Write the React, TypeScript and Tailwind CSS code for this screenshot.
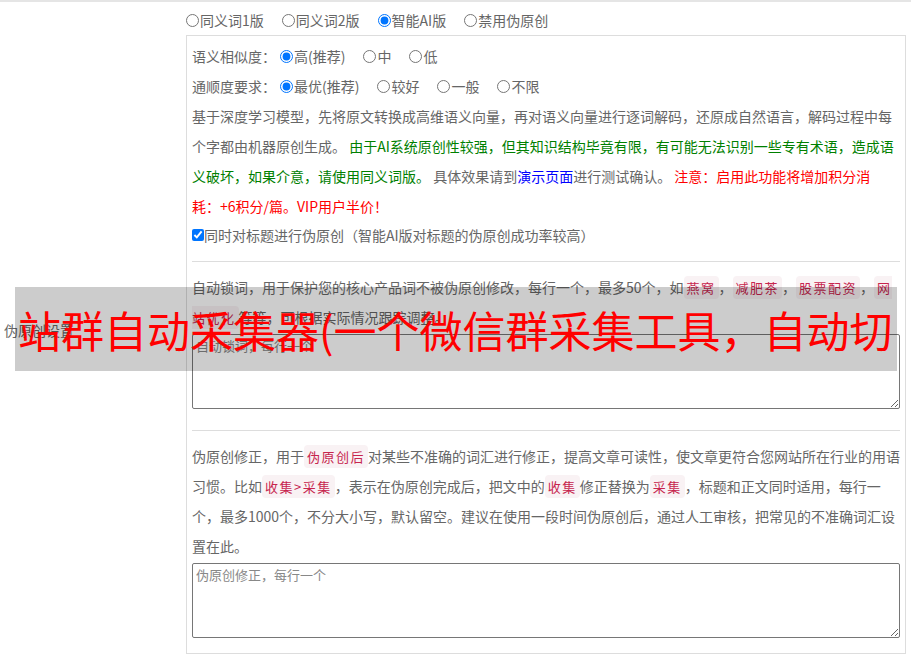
import React from 'react';

const font = { fontFamily: '"Noto Sans CJK SC", "Noto Sans", sans-serif' };

function Tag({ children }: { children: React.ReactNode }) {
  return (
    <code
      className="rounded-[4px] bg-[#f9f2f4] px-[3px] py-[2px] text-[13px] leading-[16px] tracking-[1.5px] text-[#c7254e]"
      style={font}
    >
      {children}
    </code>
  );
}

function Radio({ label, checked, name }: { label: string; checked?: boolean; name: string }) {
  return (
    <label className="mr-[18px] inline-flex items-center">
      <input type="radio" name={name} defaultChecked={checked} className="m-0 mr-[1px] h-[13px] w-[13px]" />
      {label}
    </label>
  );
}

export default function App() {
  return (
    <div
      className="relative flex h-[658px] w-[911px] border-t-2 border-[#e5e5e5] bg-white text-[14px] text-[#666]"
      style={font}
    >
      {/* left label cell */}
      <div className="flex w-[186px] shrink-0 items-center pl-[4px]">伪原创设置</div>

      {/* right cell */}
      <div className="pt-[3px]">
        <div className="flex h-[30px] items-center leading-[30px]">
          <Radio name="mode" label="同义词1版" />
          <Radio name="mode" label="同义词2版" />
          <Radio name="mode" label="智能AI版" checked />
          <Radio name="mode" label="禁用伪原创" />
        </div>

        <div className="w-[720px] border border-[#ddd] px-[5px] pt-[5px] pb-[15px] leading-[30px]">
          {/* AI options */}
          <div className="pb-[12px]">
            <div className="flex h-[30px] items-center">
              <span className="mr-[4px]">语义相似度：</span>
              <Radio name="sim" label="高(推荐)" checked />
              <Radio name="sim" label="中" />
              <Radio name="sim" label="低" />
            </div>
            <div className="flex h-[30px] items-center">
              <span className="mr-[4px]">通顺度要求：</span>
              <Radio name="flu" label="最优(推荐)" checked />
              <Radio name="flu" label="较好" />
              <Radio name="flu" label="一般" />
              <Radio name="flu" label="不限" />
            </div>
            <p>
              基于深度学习模型，先将原文转换成高维语义向量，再对语义向量进行逐词解码，还原成自然语言，解码过程中每个字都由机器原创生成。{' '}
              <span className="text-[#008000]">
                由于AI系统原创性较强，但其知识结构毕竟有限，有可能无法识别一些专有术语，造成语义破坏，如果介意，请使用同义词版。
              </span>{' '}
              具体效果请到<a className="text-[#0000ff]">演示页面</a>进行测试确认。{' '}
              <span className="text-[#ff0000]">
                注意：启用此功能将增加积分消
                <br />
                耗：+6积分/篇。VIP用户半价！
              </span>
            </p>
            <label className="flex h-[28px] items-center">
              <input type="checkbox" defaultChecked className="m-0 h-[12px] w-[12px]" />
              同时对标题进行伪原创（智能AI版对标题的伪原创成功率较高）
            </label>
          </div>

          {/* lock words */}
          <div className="border-t border-[#ddd] pt-[10px] pb-[21px]">
            <p>
              自动锁词，用于保护您的核心产品词不被伪原创修改，每行一个，最多50个，如<Tag>燕窝</Tag>，<Tag>减肥茶</Tag>，<Tag>股票配资</Tag>，<Tag>网站优化</Tag>等等，可根据实际情况跟踪调整。
            </p>
            <textarea
              placeholder="自动锁词，每行一个"
              className="mt-[2px] block h-[75px] w-full rounded-[2px] border border-[#767676] px-[3px] py-[2px] text-[13px] leading-[18px] placeholder:text-[#888]"
              style={font}
            />
          </div>

          {/* corrections */}
          <div className="border-t border-[#ddd] pt-[10px]">
            <p>
              伪原创修正，用于<Tag>伪原创后</Tag>对某些不准确的词汇进行修正，提高文章可读性，使文章更符合您网站所在行业的用语习惯。比如<Tag>收集&gt;采集</Tag>，表示在伪原创完成后，把文中的<Tag>收集</Tag>修正替换为<Tag>采集</Tag>，标题和正文同时适用，每行一个，最多1000个，不分大小写，默认留空。建议在使用一段时间伪原创后，通过人工审核，把常见的不准确词汇设置在此。
            </p>
            <textarea
              placeholder="伪原创修正，每行一个"
              className="mt-[2px] block h-[75px] w-full rounded-[2px] border border-[#767676] px-[3px] py-[2px] text-[13px] leading-[18px] placeholder:text-[#888]"
              style={font}
            />
          </div>
        </div>
      </div>

      {/* floating title banner */}
      <div className="absolute left-[15px] top-[285px] h-[84px] w-[882px] overflow-hidden whitespace-nowrap bg-black/20 pl-[3px] text-[43px] leading-[84px] text-[#ff0000]">
        站群自动采集器(一个微信群采集工具，自动切
      </div>
    </div>
  );
}
